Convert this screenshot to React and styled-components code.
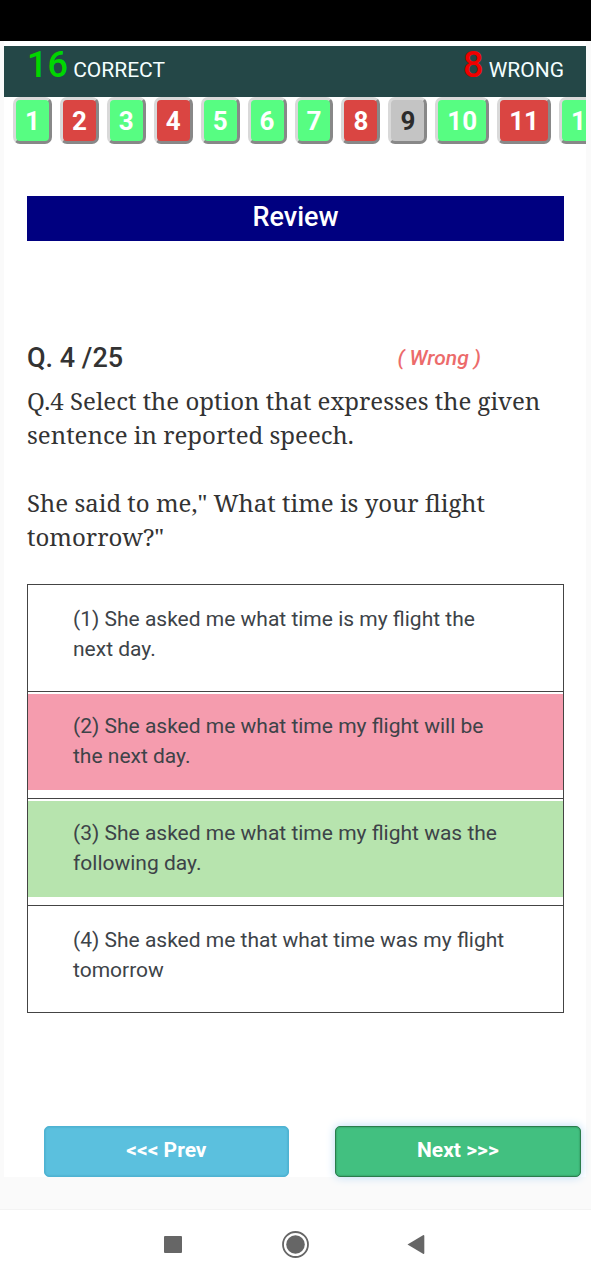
import React from "react";
import styled, { createGlobalStyle } from "styled-components";

const GlobalStyle = createGlobalStyle`
  *, *::before, *::after { box-sizing: border-box; }
  body {
    margin: 0;
    background: #fafafa;
    color: #333;
    font-family: Roboto, "Liberation Sans", sans-serif;
  }
  h1, h2, p, ol { margin: 0; padding: 0; }
`;

const Screen = styled.div`
  min-height: 100vh;
  display: flex;
  flex-direction: column;
`;

const StatusBar = styled.div`
  height: 41px;
  background: #000;
`;

const Page = styled.main`
  margin: 0 5px 0 4px;
  padding-top: 5px;
  background: #fff;
`;

const ScoreBar = styled.header`
  display: flex;
  justify-content: space-between;
  height: 51px;
  padding: 0 22px 0 23px;
  background: #244747;
  color: #f4ffff;
  font-size: 21px;
  line-height: 38px;
`;

const Count = styled.b`
  color: ${({ $color }) => $color};
  font-size: 36px;
  font-weight: 500;
`;

const NumberStrip = styled.nav`
  display: flex;
  gap: 8px;
  padding-left: 9px;
  overflow: hidden;
`;

const tones = {
  correct: { background: "#57fd82", color: "#fff" },
  wrong: { background: "#da4542", color: "#fff" },
  skipped: { background: "#c4c4c4", color: "#2c2c2c" },
};

const NumberButton = styled.button`
  flex: none;
  height: 47px;
  padding: 0 9px;
  border: 3px solid;
  border-color: #d9d9d9 #888 #888 #d9d9d9;
  border-radius: 7px;
  background: ${({ $tone }) => tones[$tone].background};
  color: ${({ $tone }) => tones[$tone].color};
  font-family: inherit;
  font-size: 26px;
  font-weight: 700;
  line-height: 38px;
`;

const Content = styled.section`
  padding: 52px 22px 0 23px;
`;

const ReviewTitle = styled.h1`
  height: 45px;
  background: #000080;
  color: #fff;
  font-size: 27px;
  font-weight: 500;
  line-height: 43px;
  text-align: center;
`;

const QuestionHead = styled.div`
  display: flex;
  justify-content: space-between;
  align-items: center;
  margin-top: 99px;
  padding-right: 83px;
  line-height: 36px;
`;

const QuestionNumber = styled.h2`
  font-size: 27px;
  font-weight: 500;
`;

const Verdict = styled.em`
  color: #ec6b6b;
  font-size: 21px;
  font-weight: 500;
`;

const QuestionText = styled.div`
  display: grid;
  gap: 34px;
  margin-top: 8px;
  font-family: "Noto Serif", "Liberation Serif", serif;
  font-size: 24px;
  line-height: 34px;
`;

const Options = styled.ol`
  margin-top: 30px;
  border: 1px solid #444;
  border-bottom: 0;
  list-style: none;
`;

const Option = styled.li`
  padding: 2px 0 8px;
  border-bottom: 1px solid #444;
`;

const fills = { wrong: "#f59cae", correct: "#b7e4ae" };

const OptionBody = styled.p`
  min-height: 96px;
  padding: 17px 48px 19px 45px;
  background: ${({ $mark }) => fills[$mark] || "transparent"};
  color: #3d4348;
  font-size: 21px;
  line-height: 30px;
`;

const Pager = styled.div`
  display: flex;
  gap: 46px;
  margin-top: 113px;
  padding: 0 5px 0 40px;
`;

const PagerButton = styled.button`
  flex: auto;
  height: 51px;
  padding: 0 0 3px;
  border: 1px solid ${({ $primary }) => ($primary ? "#2a7d4c" : "#4eb3d3")};
  border-radius: 5px;
  background: ${({ $primary }) => ($primary ? "#42c080" : "#5bc0de")};
  box-shadow: ${({ $primary }) =>
    $primary ? "0 0 10px #b9d9f5, inset 0 0 2px #2a7d4c" : "inset 0 0 2px #3f9fbe"};
  color: #fff;
  font-family: inherit;
  font-size: 21px;
  font-weight: 700;
`;

const SystemBar = styled.nav`
  display: flex;
  justify-content: center;
  align-items: center;
  gap: 94px;
  height: 71px;
  margin-top: auto;
  border-top: 1px solid #f3f3f3;
  background: #fff;
`;

const SystemButton = styled.button`
  display: flex;
  padding: 0;
  border: 0;
  background: none;
`;

const numbers = [
  "correct", "wrong", "correct", "wrong", "correct", "correct",
  "correct", "wrong", "skipped", "correct", "wrong", "correct",
];

const options = [
  { text: "(1) She asked me what time is my flight the next day." },
  { text: "(2) She asked me what time my flight will be the next day.", mark: "wrong" },
  { text: "(3) She asked me what time my flight was the following day.", mark: "correct" },
  { text: "(4) She asked me that what time was my flight tomorrow" },
];

export default function App() {
  return (
    <Screen>
      <GlobalStyle />
      <StatusBar />
      <Page>
        <ScoreBar>
          <span><Count $color="#00d600">16</Count> CORRECT</span>
          <span><Count $color="#f00000">8</Count> WRONG</span>
        </ScoreBar>
        <NumberStrip>
          {numbers.map((tone, i) => (
            <NumberButton key={i} type="button" $tone={tone}>{i + 1}</NumberButton>
          ))}
        </NumberStrip>
        <Content>
          <ReviewTitle>Review</ReviewTitle>
          <QuestionHead>
            <QuestionNumber>Q. 4 /25</QuestionNumber>
            <Verdict>( Wrong )</Verdict>
          </QuestionHead>
          <QuestionText>
            <p>Q.4 Select the option that expresses the given sentence in reported speech.</p>
            <p>She said to me," What time is your flight tomorrow?"</p>
          </QuestionText>
          <Options>
            {options.map(({ text, mark }) => (
              <Option key={text}><OptionBody $mark={mark}>{text}</OptionBody></Option>
            ))}
          </Options>
        </Content>
        <Pager>
          <PagerButton type="button">&lt;&lt;&lt; Prev</PagerButton>
          <PagerButton type="button" $primary>Next &gt;&gt;&gt;</PagerButton>
        </Pager>
      </Page>
      <SystemBar>
        <SystemButton type="button" aria-label="Recent apps">
          <svg width="28" height="28" viewBox="0 0 28 28" fill="#666">
            <rect x="4" y="5" width="18" height="17" rx="1" />
          </svg>
        </SystemButton>
        <SystemButton type="button" aria-label="Home">
          <svg width="28" height="28" viewBox="0 0 28 28" fill="#666">
            <circle cx="13.5" cy="13.5" r="12.5" fill="none" stroke="#666" strokeWidth="1.8" />
            <circle cx="13.5" cy="13.5" r="9.3" />
          </svg>
        </SystemButton>
        <SystemButton type="button" aria-label="Back">
          <svg width="28" height="28" viewBox="0 0 28 28" fill="#666">
            <path d="M3.500 13.500 19 4.200q1.300-.7 1.300.8v17q0 1.500-1.300.8Z" />
          </svg>
        </SystemButton>
      </SystemBar>
    </Screen>
  );
}
